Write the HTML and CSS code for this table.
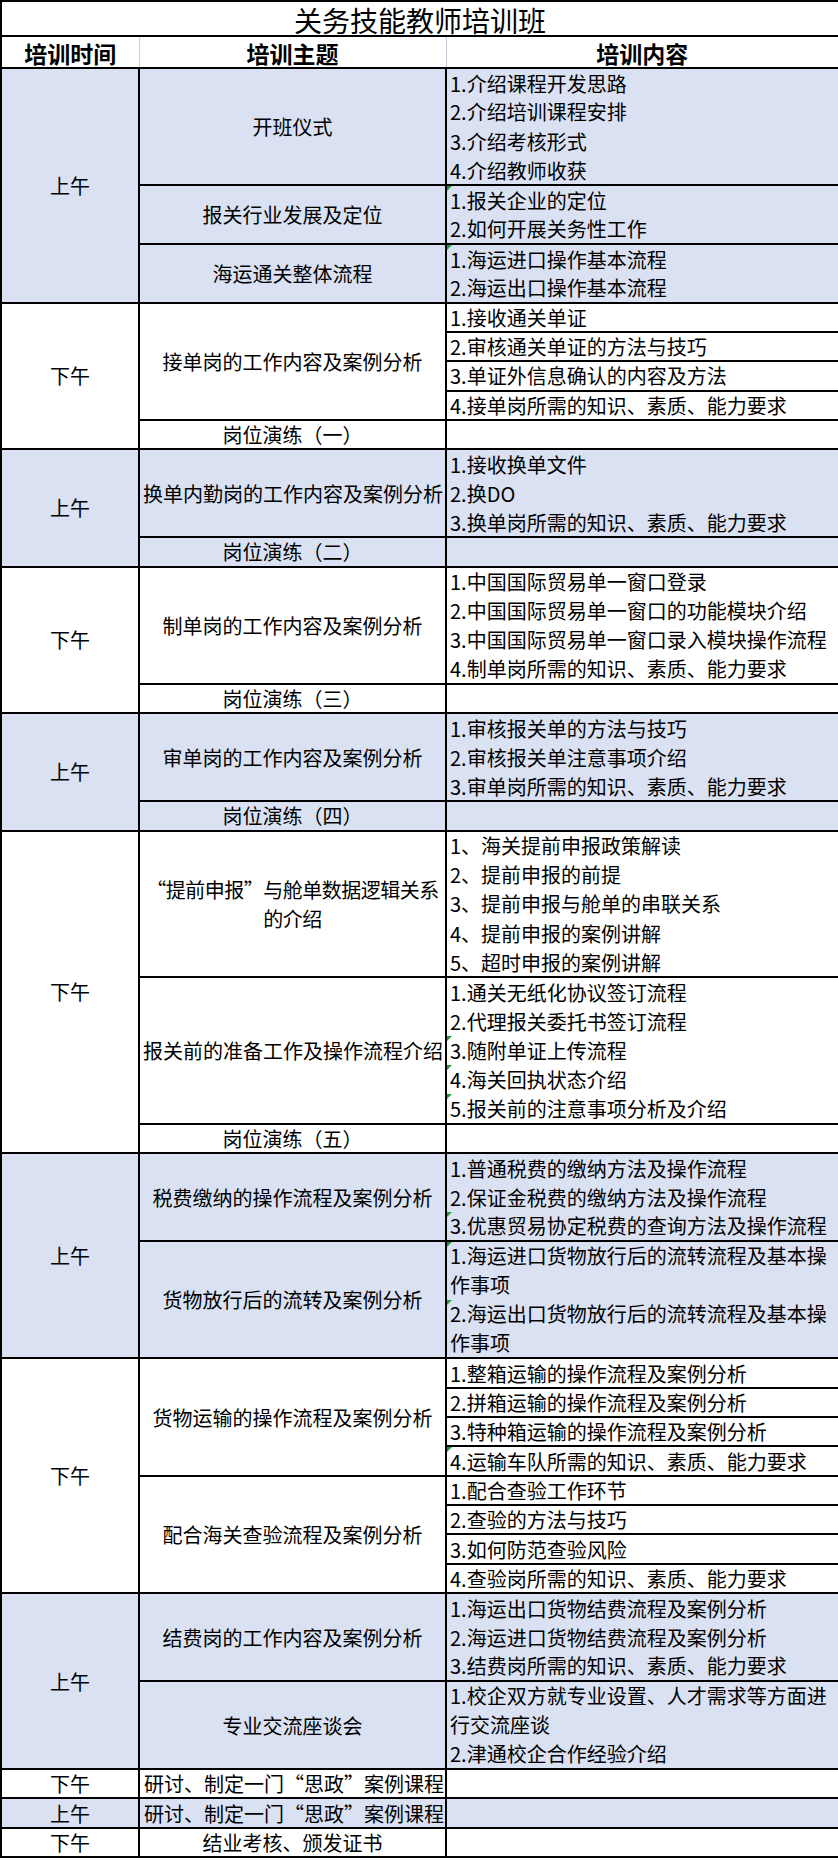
FILE: index.html
```html
<!DOCTYPE html>
<html lang="zh-CN">
<head>
<meta charset="utf-8">
<title>关务技能教师培训班</title>
<link rel="stylesheet" href="styles.css">
</head>
<body>
<table class="sheet">
  <colgroup>
    <col class="c-time">
    <col class="c-topic">
    <col class="c-item">
  </colgroup>
  <thead>
    <tr class="r-title"><td class="title" colspan="3">关务技能教师培训班</td></tr>
    <tr class="r-head"><th>培训时间</th><th>培训主题</th><th>培训内容</th></tr>
  </thead>

  <tbody class="am">
    <tr><td class="time" rowspan="8">上午</td><td class="topic" rowspan="4">开班仪式</td><td class="item first">1.介绍课程开发思路</td></tr>
    <tr><td class="item">2.介绍培训课程安排</td></tr>
    <tr><td class="item">3.介绍考核形式</td></tr>
    <tr><td class="item">4.介绍教师收获</td></tr>
    <tr><td class="topic" rowspan="2">报关行业发展及定位</td><td class="item first flag">1.报关企业的定位</td></tr>
    <tr><td class="item">2.如何开展关务性工作</td></tr>
    <tr><td class="topic" rowspan="2">海运通关整体流程</td><td class="item first flag">1.海运进口操作基本流程</td></tr>
    <tr><td class="item">2.海运出口操作基本流程</td></tr>
  </tbody>

  <tbody class="pm">
    <tr><td class="time" rowspan="5">下午</td><td class="topic" rowspan="4">接单岗的工作内容及案例分析</td><td class="item first">1.接收通关单证</td></tr>
    <tr><td class="item">2.审核通关单证的方法与技巧</td></tr>
    <tr><td class="item">3.单证外信息确认的内容及方法</td></tr>
    <tr><td class="item">4.接单岗所需的知识、素质、能力要求</td></tr>
    <tr><td class="topic">岗位演练（一）</td><td class="blank"></td></tr>
  </tbody>

  <tbody class="am">
    <tr><td class="time" rowspan="4">上午</td><td class="topic" rowspan="3">换单内勤岗的工作内容及案例分析</td><td class="item first">1.接收换单文件</td></tr>
    <tr><td class="item">2.换DO</td></tr>
    <tr><td class="item">3.换单岗所需的知识、素质、能力要求</td></tr>
    <tr><td class="topic">岗位演练（二）</td><td class="blank"></td></tr>
  </tbody>

  <tbody class="pm plain">
    <tr><td class="time" rowspan="5">下午</td><td class="topic" rowspan="4">制单岗的工作内容及案例分析</td><td class="item first">1.中国国际贸易单一窗口登录</td></tr>
    <tr><td class="item">2.中国国际贸易单一窗口的功能模块介绍</td></tr>
    <tr><td class="item">3.中国国际贸易单一窗口录入模块操作流程</td></tr>
    <tr><td class="item">4.制单岗所需的知识、素质、能力要求</td></tr>
    <tr><td class="topic">岗位演练（三）</td><td class="blank"></td></tr>
  </tbody>

  <tbody class="am">
    <tr><td class="time" rowspan="4">上午</td><td class="topic" rowspan="3">审单岗的工作内容及案例分析</td><td class="item first">1.审核报关单的方法与技巧</td></tr>
    <tr><td class="item">2.审核报关单注意事项介绍</td></tr>
    <tr><td class="item">3.审单岗所需的知识、素质、能力要求</td></tr>
    <tr><td class="topic">岗位演练（四）</td><td class="blank"></td></tr>
  </tbody>

  <tbody class="pm plain">
    <tr><td class="time" rowspan="11">下午</td><td class="topic two" rowspan="5">“提前申报”与舱单数据逻辑关系<br>的介绍</td><td class="item first">1、海关提前申报政策解读</td></tr>
    <tr><td class="item">2、提前申报的前提</td></tr>
    <tr><td class="item">3、提前申报与舱单的串联关系</td></tr>
    <tr><td class="item">4、提前申报的案例讲解</td></tr>
    <tr><td class="item">5、超时申报的案例讲解</td></tr>
    <tr><td class="topic" rowspan="5">报关前的准备工作及操作流程介绍</td><td class="item first">1.通关无纸化协议签订流程</td></tr>
    <tr><td class="item">2.代理报关委托书签订流程</td></tr>
    <tr><td class="item flag">3.随附单证上传流程</td></tr>
    <tr><td class="item flag">4.海关回执状态介绍</td></tr>
    <tr><td class="item flag">5.报关前的注意事项分析及介绍</td></tr>
    <tr><td class="topic">岗位演练（五）</td><td class="blank"></td></tr>
  </tbody>

  <tbody class="am">
    <tr><td class="time" rowspan="5">上午</td><td class="topic" rowspan="3">税费缴纳的操作流程及案例分析</td><td class="item first">1.普通税费的缴纳方法及操作流程</td></tr>
    <tr><td class="item">2.保证金税费的缴纳方法及操作流程</td></tr>
    <tr><td class="item flag">3.优惠贸易协定税费的查询方法及操作流程</td></tr>
    <tr class="r2"><td class="topic" rowspan="2">货物放行后的流转及案例分析</td><td class="item first wrap flag">1.海运进口货物放行后的流转流程及基本操作事项</td></tr>
    <tr class="r2"><td class="item wrap flag">2.海运出口货物放行后的流转流程及基本操作事项</td></tr>
  </tbody>

  <tbody class="pm">
    <tr><td class="time" rowspan="8">下午</td><td class="topic" rowspan="4">货物运输的操作流程及案例分析</td><td class="item first">1.整箱运输的操作流程及案例分析</td></tr>
    <tr><td class="item">2.拼箱运输的操作流程及案例分析</td></tr>
    <tr><td class="item">3.特种箱运输的操作流程及案例分析</td></tr>
    <tr><td class="item flag">4.运输车队所需的知识、素质、能力要求</td></tr>
    <tr><td class="topic" rowspan="4">配合海关查验流程及案例分析</td><td class="item first">1.配合查验工作环节</td></tr>
    <tr><td class="item">2.查验的方法与技巧</td></tr>
    <tr><td class="item">3.如何防范查验风险</td></tr>
    <tr><td class="item">4.查验岗所需的知识、素质、能力要求</td></tr>
  </tbody>

  <tbody class="am">
    <tr><td class="time" rowspan="5">上午</td><td class="topic" rowspan="3">结费岗的工作内容及案例分析</td><td class="item first">1.海运出口货物结费流程及案例分析</td></tr>
    <tr><td class="item">2.海运进口货物结费流程及案例分析</td></tr>
    <tr><td class="item">3.结费岗所需的知识、素质、能力要求</td></tr>
    <tr class="r2"><td class="topic" rowspan="2">专业交流座谈会</td><td class="item first wrap">1.校企双方就专业设置、人才需求等方面进行交流座谈</td></tr>
    <tr><td class="item">2.津通校企合作经验介绍</td></tr>
  </tbody>

  <tbody class="pm">
    <tr><td class="time">下午</td><td class="topic left">研讨、制定一门“思政”案例课程</td><td class="blank"></td></tr>
  </tbody>
  <tbody class="am">
    <tr><td class="time">上午</td><td class="topic left">研讨、制定一门“思政”案例课程</td><td class="blank"></td></tr>
  </tbody>
  <tbody class="pm">
    <tr><td class="time">下午</td><td class="topic">结业考核、颁发证书</td><td class="blank"></td></tr>
  </tbody>
</table>
</body>
</html>
```

FILE: styles.css
```css
html, body {
  margin: 0;
  padding: 0;
  background: #ffffff;
}

body {
  font-family: "Noto Sans CJK SC", "Noto Sans", sans-serif;
  color: #000000;
}

.sheet {
  border-collapse: collapse;
  table-layout: fixed;
  width: 838px;
}

.c-time { width: 138px; }
.c-topic { width: 307px; }
.c-item { width: 393px; }

.sheet tr { height: 29.333px; }
.sheet tr.r-title { height: 35px; }
.sheet tr.r-head { height: 32px; }
.sheet tr.r2 { height: 58.667px; }

.sheet td,
.sheet th {
  border: 2px solid #000000;
  padding: 1px 3px 0 3px;
  font-size: 20px;
  line-height: 24px;
  font-weight: 400;
  vertical-align: middle;
  white-space: nowrap;
  overflow: hidden;
}

.sheet td.title {
  font-size: 28px;
  font-weight: 400;
  line-height: 28px;
  text-align: center;
  padding-top: 2px;
  overflow: visible;
}

.sheet th {
  font-size: 23px;
  font-weight: 700;
  line-height: 28px;
  text-align: center;
  border-left: 1px solid #c8d0de;
  border-right: 1px solid #c8d0de;
}

.sheet th:first-child { border-left: 2px solid #000000; }
.sheet th:last-child { border-right: 2px solid #000000; }

.am td { background: #d9e1f2; }

.time,
.topic { text-align: center; }

.sheet .topic.two {
  line-height: 29px;
  padding-left: 0;
  padding-right: 0;
  letter-spacing: -0.5px;
}

.topic.left {
  text-align: left;
  padding-left: 4px;
  padding-right: 0;
}

.item {
  text-align: left;
  border-top: 1px solid #c8d0de;
  border-bottom: 1px solid #c8d0de;
}

.am .item,
.plain .item {
  border-top-style: none;
  border-bottom-style: none;
}

.sheet .item.first { border-top: 2px solid #000000; }

.item.wrap {
  white-space: normal;
  line-height: 28.5px;
  padding-top: 0;
}

.flag { position: relative; }

.flag::before {
  content: "";
  position: absolute;
  left: 0;
  top: 0;
  border-top: 5px solid #1e9b3c;
  border-right: 5px solid transparent;
}
```
